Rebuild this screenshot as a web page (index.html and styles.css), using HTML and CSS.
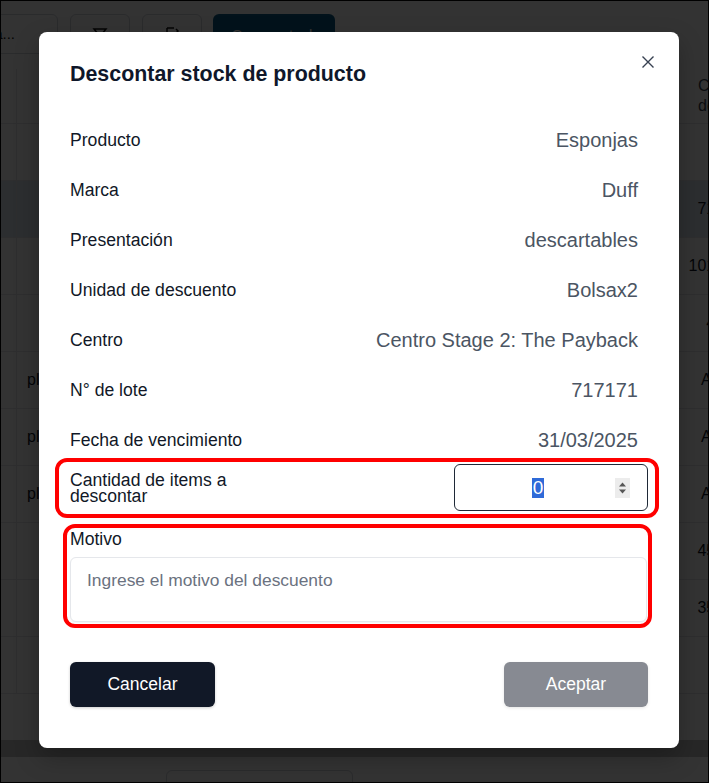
FILE: index.html
```html
<!DOCTYPE html>
<html lang="es">
<head>
<meta charset="utf-8">
<title>Descontar stock de producto</title>
<link rel="stylesheet" href="styles.css">
</head>
<body>
<div class="frame">
  <div class="page">
    <div class="toolbar">
      <div class="search"><span class="search-text">Buscar por marca...</span></div>
      <div class="tool-btn">
        <svg width="16" height="16" viewBox="0 0 16 16"><path d="M2 3h12l-4.5 5.5V13l-3 1.5V8.5z" fill="none" stroke="#111" stroke-width="1.5"/></svg>
      </div>
      <div class="tool-btn">
        <svg width="16" height="16" viewBox="0 0 16 16"><path d="M3 2h7M3 2v12h7M3 8h5M12 3l2 2-2 2" fill="none" stroke="#111" stroke-width="1.5"/></svg>
      </div>
      <div class="primary-btn">Cargar stock</div>
    </div>
    <div class="table">
      <div class="tr th"><div class="c1"></div><div class="c2"></div><div class="c3 head">Cantidad<br>de compra</div></div>
      <div class="tr"><div class="c1"></div><div class="c2"></div><div class="c3"></div></div>
      <div class="tr hl"><div class="c1"></div><div class="c2"></div><div class="c3">7100</div></div>
      <div class="tr"><div class="c1"></div><div class="c2"></div><div class="c3">10100</div></div>
      <div class="tr"><div class="c1"></div><div class="c2"></div><div class="c3">400</div></div>
      <div class="tr"><div class="c1"></div><div class="c2">plástico</div><div class="c3">Abril</div></div>
      <div class="tr"><div class="c1"></div><div class="c2">plástico</div><div class="c3">Abril</div></div>
      <div class="tr"><div class="c1"></div><div class="c2">plástico</div><div class="c3">Abril</div></div>
      <div class="tr"><div class="c1"></div><div class="c2"></div><div class="c3">4500</div></div>
      <div class="tr"><div class="c1"></div><div class="c2"></div><div class="c3">3500</div></div>
      <div class="tr"><div class="c1"></div><div class="c2"></div><div class="c3"></div></div>
    </div>
    <div class="hscroll"></div>
    <div class="pager"><div class="pager-box"></div></div>
  </div>

  <div class="overlay">
    <div class="modal">
      <h2 class="modal-title">Descontar stock de producto</h2>
      <button class="close" aria-label="Cerrar">
        <svg width="14" height="14" viewBox="0 0 14 14"><path d="M1.5 1.5l11 11M12.5 1.5l-11 11" stroke="#374151" stroke-width="1.4" fill="none"/></svg>
      </button>

      <div class="details">
        <div class="row"><span class="label">Producto</span><span class="value">Esponjas</span></div>
        <div class="row"><span class="label">Marca</span><span class="value">Duff</span></div>
        <div class="row"><span class="label">Presentación</span><span class="value">descartables</span></div>
        <div class="row"><span class="label">Unidad de descuento</span><span class="value">Bolsax2</span></div>
        <div class="row"><span class="label">Centro</span><span class="value">Centro Stage 2: The Payback</span></div>
        <div class="row"><span class="label">N° de lote</span><span class="value">717171</span></div>
        <div class="row"><span class="label">Fecha de vencimiento</span><span class="value">31/03/2025</span></div>
      </div>

      <div class="mark mark-qty">
        <div class="qty-row">
          <span class="qty-label">Cantidad de items a descontar</span>
          <div class="num-input">
            <span class="num-value"><span class="sel">0</span></span>
            <span class="spin">
              <svg width="15" height="20" viewBox="0 0 15 20"><rect width="15" height="20" fill="#ececec"/><path d="M4 8.5l3.5-4 3.5 4z M4 11.5l3.5 4 3.5-4z" fill="#555"/></svg>
            </span>
          </div>
        </div>
      </div>

      <div class="mark mark-reason">
        <label class="reason-label" for="motivo">Motivo</label>
        <textarea id="motivo" class="reason" placeholder="Ingrese el motivo del descuento"></textarea>
      </div>

      <div class="actions">
        <button class="btn btn-cancel">Cancelar</button>
        <button class="btn btn-accept" disabled>Aceptar</button>
      </div>
    </div>
  </div>
</div>
</body>
</html>
```

FILE: styles.css
```css
* { box-sizing: border-box; }

html, body {
  margin: 0;
  padding: 0;
  background: #333;
}

body {
  font-family: "Liberation Sans", Arial, sans-serif;
  color: #111827;
}

.frame {
  position: relative;
  width: 709px;
  height: 783px;
  border: 1px solid #000;
  overflow: hidden;
  background: #fff;
}

/* ---------- background page ---------- */
.page {
  display: flex;
  flex-direction: column;
  height: 100%;
  overflow: hidden;
}

.toolbar {
  display: flex;
  align-items: center;
  gap: 12px;
  padding-top: 13px;
  height: 53px;
  flex: none;
}

.search {
  width: 200px;
  height: 40px;
  margin-left: -143px;
  border: 1px solid #d1d5db;
  border-radius: 6px;
  font-size: 15px;
  line-height: 38px;
  padding-right: 42px;
  text-align: right;
  white-space: nowrap;
  overflow: hidden;
  color: #111;
}

.tool-btn {
  width: 60px;
  height: 40px;
  border: 1px solid #d1d5db;
  border-radius: 6px;
  display: flex;
  align-items: center;
  justify-content: center;
}

.primary-btn {
  width: 122px;
  height: 40px;
  margin-left: -1px;
  border-radius: 6px;
  background: #0d5c85;
  color: #fff;
  font-size: 15px;
  display: flex;
  align-items: center;
  justify-content: center;
}

.table {
  margin-top: 15px;
  flex: none;
}

.tr {
  display: flex;
  height: 57px;
  border-bottom: 1px solid #e5e7eb;
  font-size: 16px;
  width: 800px;
}

.tr.th { height: 55px; }
.tr.hl { background: #dde5f0; }

.c1 {
  width: 16px;
  border-right: 1px solid #e5e7eb;
}

.c2 {
  width: 664px;
  padding-left: 10px;
  display: flex;
  align-items: center;
  white-space: nowrap;
}

.c3 {
  width: 52px;
  display: flex;
  align-items: center;
  justify-content: flex-end;
  white-space: nowrap;
}

.c3.head {
  width: 100px;
  justify-content: flex-start;
  padding-left: 17px;
  line-height: 20px;
  color: #374151;
}

.hscroll {
  margin-top: 46px;
  height: 17px;
  background: #c1c1c1;
  flex: none;
}

.pager {
  padding-top: 13px;
  padding-left: 165px;
}

.pager-box {
  width: 187px;
  height: 40px;
  border: 1px solid #d1d5db;
  border-radius: 6px;
}

/* ---------- overlay + modal ---------- */
.overlay {
  position: absolute;
  inset: 0;
  background: rgba(0, 0, 0, 0.8);
  padding: 31px 0 0 38px;
}

.modal {
  position: relative;
  width: 640px;
  background: #fff;
  border-radius: 8px;
  padding: 30px 31px 41px 31px;
  box-shadow: 0 10px 25px rgba(0, 0, 0, 0.25);
}

.modal-title {
  margin: 0;
  font-size: 21.4px;
  line-height: 24px;
  font-weight: 700;
  color: #0f172a;
}

.close {
  position: absolute;
  top: 23px;
  right: 24px;
  width: 14px;
  height: 14px;
  padding: 0;
  border: 0;
  background: none;
  display: flex;
}

.details {
  margin-top: 43px;
  display: flex;
  flex-direction: column;
  gap: 28px;
}

.row {
  display: flex;
  align-items: center;
  justify-content: space-between;
  height: 22px;
}

.label {
  font-size: 17.6px;
  color: #111827;
}

.value {
  font-size: 20px;
  color: #4b5563;
  padding-right: 10px;
}

/* red highlight frames */
.mark {
  border: 4px solid #ff0000;
  border-radius: 12px;
}

.mark-qty {
  margin: 7px -11px 0 -15px;
  padding: 2px 7px 3px 11px;
}

.qty-row {
  display: flex;
  align-items: center;
  justify-content: space-between;
}

.qty-label {
  width: 200px;
  font-size: 17.6px;
  line-height: 16px;
  color: #111827;
}

.num-input {
  width: 194px;
  height: 47px;
  border: 1px solid #1f2937;
  border-radius: 6px;
  display: flex;
  align-items: center;
  padding-right: 17px;
}

.num-value {
  flex: 1;
  text-align: center;
  padding-left: 6px;
  font-size: 19px;
  line-height: 20px;
}

.sel {
  background: #2f6ad8;
  color: #fff;
  display: inline-block;
  padding: 0 1px;
}

.spin {
  display: flex;
  width: 15px;
  height: 20px;
}

.mark-reason {
  margin: 6px -4px 0 -7px;
  padding: 2px 1px 2px 3px;
  display: flex;
  flex-direction: column;
}

.reason-label {
  font-size: 17.6px;
  line-height: 18px;
  color: #111827;
}

.reason {
  margin-top: 9px;
  width: 100%;
  height: 65px;
  border: 1px solid #e5e7eb;
  border-radius: 6px;
  padding: 13px 16px;
  font-family: "Liberation Sans", Arial, sans-serif;
  font-size: 17.4px;
  line-height: 18px;
  resize: none;
  box-shadow: 0 1px 2px rgba(0, 0, 0, 0.06);
  outline: none;
}

.reason::placeholder {
  color: #6b7280;
}

.actions {
  margin-top: 34px;
  display: flex;
  justify-content: space-between;
}

.btn {
  height: 45px;
  border: 0;
  border-radius: 6px;
  font-family: "Liberation Sans", Arial, sans-serif;
  font-size: 17.5px;
  color: #fff;
  background: #111827;
  box-shadow: 0 1px 3px rgba(0, 0, 0, 0.2);
}

.btn-cancel { width: 145px; }

.btn-accept {
  width: 144px;
  opacity: 0.5;
}
```
